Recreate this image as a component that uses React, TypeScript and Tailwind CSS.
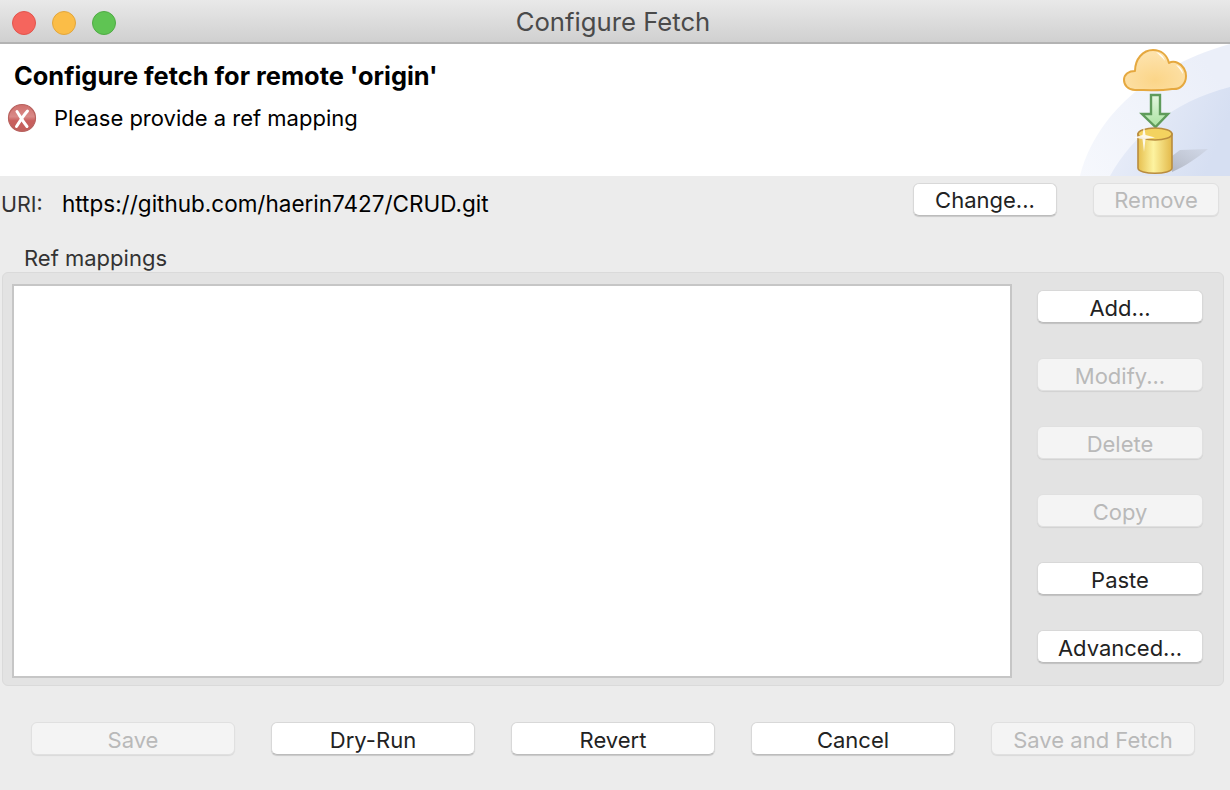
const font = { fontFamily: 'Inter, "Noto Sans", sans-serif' };

function Btn({ label, disabled, className = '' }: { label: string; disabled?: boolean; className?: string }) {
  return (
    <div
      className={
        'h-[33px] flex items-center justify-center rounded-[6px] text-[22px] leading-none pt-[3px] ' +
        (disabled
          ? 'bg-[#f4f4f4] text-[#b9b9b9] border border-[#e0e0e0] shadow-[0_1px_1px_rgba(0,0,0,0.08)] '
          : 'bg-white text-[#222222] border border-[#d8d8d8] border-b-[#bcbcbc] shadow-[0_1px_1px_rgba(0,0,0,0.15)] ') +
        className
      }
    >
      {label}
    </div>
  );
}

function ErrorIcon() {
  return (
    <svg width="30" height="30" viewBox="0 0 30 30">
      <defs>
        <linearGradient id="err" x1="0" y1="0" x2="0" y2="1">
          <stop offset="0" stopColor="#cf6f6c" />
          <stop offset="0.45" stopColor="#d98a88" />
          <stop offset="0.6" stopColor="#c9605e" />
          <stop offset="1" stopColor="#c2605c" />
        </linearGradient>
      </defs>
      <circle cx="15" cy="15" r="13.5" fill="url(#err)" stroke="#b8625f" strokeWidth="1.2" />
      <path d="M10 8.5C13 13 15.5 18 20 23.5M20.5 8C16.5 12.5 13 18 9.5 23.5" stroke="#fff" strokeWidth="3" fill="none" strokeLinecap="round" />
    </svg>
  );
}

function Banner() {
  return (
    <svg width="150" height="132" viewBox="0 0 150 132">
      <defs>
        <linearGradient id="wave1" x1="0" y1="1" x2="1" y2="0.4">
          <stop offset="0" stopColor="#f6f8fd" />
          <stop offset="1" stopColor="#ebeff9" />
        </linearGradient>
        <linearGradient id="wave2" x1="0" y1="0" x2="1" y2="0.3">
          <stop offset="0" stopColor="#ecf0fa" />
          <stop offset="1" stopColor="#d6dff2" />
        </linearGradient>
        <radialGradient id="cloud" cx="0.5" cy="0.75" r="0.65">
          <stop offset="0" stopColor="#fbd588" />
          <stop offset="1" stopColor="#fde2ab" />
        </radialGradient>
        <linearGradient id="arrow" x1="0" y1="0" x2="0" y2="1">
          <stop offset="0" stopColor="#e4f6df" />
          <stop offset="1" stopColor="#a9e3a0" />
        </linearGradient>
        <linearGradient id="can" x1="0" y1="0" x2="1" y2="0">
          <stop offset="0" stopColor="#e6bf4f" />
          <stop offset="0.45" stopColor="#fdf3a0" />
          <stop offset="1" stopColor="#e3b94a" />
        </linearGradient>
        <linearGradient id="shade" x1="0" y1="1" x2="1" y2="0">
          <stop offset="0" stopColor="#a6abb6" stopOpacity="0.8" />
          <stop offset="1" stopColor="#c3c8d4" stopOpacity="0.4" />
        </linearGradient>
      </defs>
      <path d="M0 132C12 82 58 26 150 0V132Z" fill="url(#wave1)" />
      <path d="M30 132C52 92 92 58 150 43V132Z" fill="url(#wave2)" />
      <path d="M92 128L92 112L100 106L128 105C118 113 106 122 92 128Z" fill="url(#shade)" />
      <path
        d="M55 46C48 46 44 41 44 36C44 30 49 27 55 27C55 15 63 6 73 6C81 6 87 11 89 19C92 17 96 18 98 19C103 21 106 27 106 32C106 39 101 46 92 45C80 47 66 46 55 46Z"
        fill="url(#cloud)"
        stroke="#e5a83f"
        strokeWidth="2"
        strokeLinejoin="round"
      />
      <path d="M76 8C80 9 84 12 85 17C82 13 79 11 76 8Z" fill="#fff" opacity="0.9" />
      <path d="M96 21C100 22 103 26 103 30C101 27 99 24 96 21Z" fill="#fff" opacity="0.9" />
      <path d="M71 51H80V70H88L75.5 83L62 70H71Z" fill="url(#arrow)" stroke="#5f9b5b" strokeWidth="2.4" strokeLinejoin="miter" />
      <path d="M58 90V124C58 131 92 131 92 124V90Z" fill="url(#can)" stroke="#b98c3e" strokeWidth="1.6" />
      <ellipse cx="75" cy="90" rx="17" ry="6" fill="#f3d25f" stroke="#b98c3e" strokeWidth="1.6" />
      <path d="M64 81L65.5 91L75 93.5L65.5 95L64 108L62.5 95L54 93.5L62.5 91Z" fill="#fff" opacity="0.85" />
    </svg>
  );
}

export default function App() {
  const sideButtons = [
    { label: 'Add...' },
    { label: 'Modify...', disabled: true },
    { label: 'Delete', disabled: true },
    { label: 'Copy', disabled: true },
    { label: 'Paste' },
    { label: 'Advanced...' },
  ];
  const bottomButtons = [
    { label: 'Save', disabled: true },
    { label: 'Dry-Run' },
    { label: 'Revert' },
    { label: 'Cancel' },
    { label: 'Save and Fetch', disabled: true },
  ];

  return (
    <div style={font} className="w-[1230px] h-[790px] overflow-hidden bg-[#ececec] flex flex-col text-[#1c1c1c]">
      {/* Title bar */}
      <div className="relative h-[44px] shrink-0 flex items-center justify-center bg-gradient-to-b from-[#e9e9e9] to-[#d0d0d0] border-b-2 border-[#b3b3b3]">
        <div className="absolute left-[12px] top-[11px] flex gap-[16px]">
          <div className="w-[24px] h-[24px] rounded-full bg-[#f5655d] border border-[#e2544c]" />
          <div className="w-[24px] h-[24px] rounded-full bg-[#fbbd47] border border-[#e2a63c]" />
          <div className="w-[24px] h-[24px] rounded-full bg-[#5fc453] border border-[#50ab45]" />
        </div>
        <span className="text-[25.7px] text-[#4a4a4a] mt-[3px] -ml-[4px]">Configure Fetch</span>
      </div>

      {/* Banner */}
      <div className="relative h-[132px] shrink-0 bg-white pl-[14px] pt-[17px]">
        <div className="text-[25.4px] font-bold leading-[30px] text-black">Configure fetch for remote 'origin'</div>
        <div className="flex items-center mt-[12px] -ml-[7px]">
          <ErrorIcon />
          <span className="ml-[17px] text-[22px] leading-[30px] text-black">Please provide a ref mapping</span>
        </div>
        <div className="absolute right-0 top-0">
          <Banner />
        </div>
      </div>

      {/* URI row */}
      <div className="h-[72px] shrink-0 flex pl-[1px] pt-[7px]">
        <span className="w-[61px] text-[21.5px] leading-[24px] mt-[9px] text-[#333333]">URI:</span>
        <span className="flex-1 text-[22.5px] leading-[26px] mt-[8px] text-black">https://github.com/haerin7427/CRUD.git</span>
        <Btn label="Change..." className="w-[144px] !pt-[1px]" />
        <Btn label="Remove" disabled className="w-[126px] ml-[36px] mr-[11px] !pt-[1px]" />
      </div>

      {/* Ref mappings group */}
      <div className="h-[24px] shrink-0 pl-[24px] text-[22px] leading-[24px] -translate-y-[2px] text-[#333333]">Ref mappings</div>
      <div className="ml-[2px] mr-[6px] h-[414px] shrink-0 flex bg-[#e3e3e3] border border-[#dadada] rounded-[6px] pl-[9px] pt-[11px] pb-[7px]">
        <div className="w-[1000px] bg-white border-2 border-[#c6c6c6]" />
        <div className="ml-[25px] w-[166px] flex flex-col gap-[35px] pt-[6px]">
          {sideButtons.map((b) => (
            <Btn key={b.label} label={b.label} disabled={b.disabled} />
          ))}
        </div>
      </div>

      {/* Bottom buttons */}
      <div className="flex gap-[36px] pl-[31px] pt-[36px]">
        {bottomButtons.map((b) => (
          <Btn key={b.label} label={b.label} disabled={b.disabled} className="w-[204px]" />
        ))}
      </div>
    </div>
  );
}
